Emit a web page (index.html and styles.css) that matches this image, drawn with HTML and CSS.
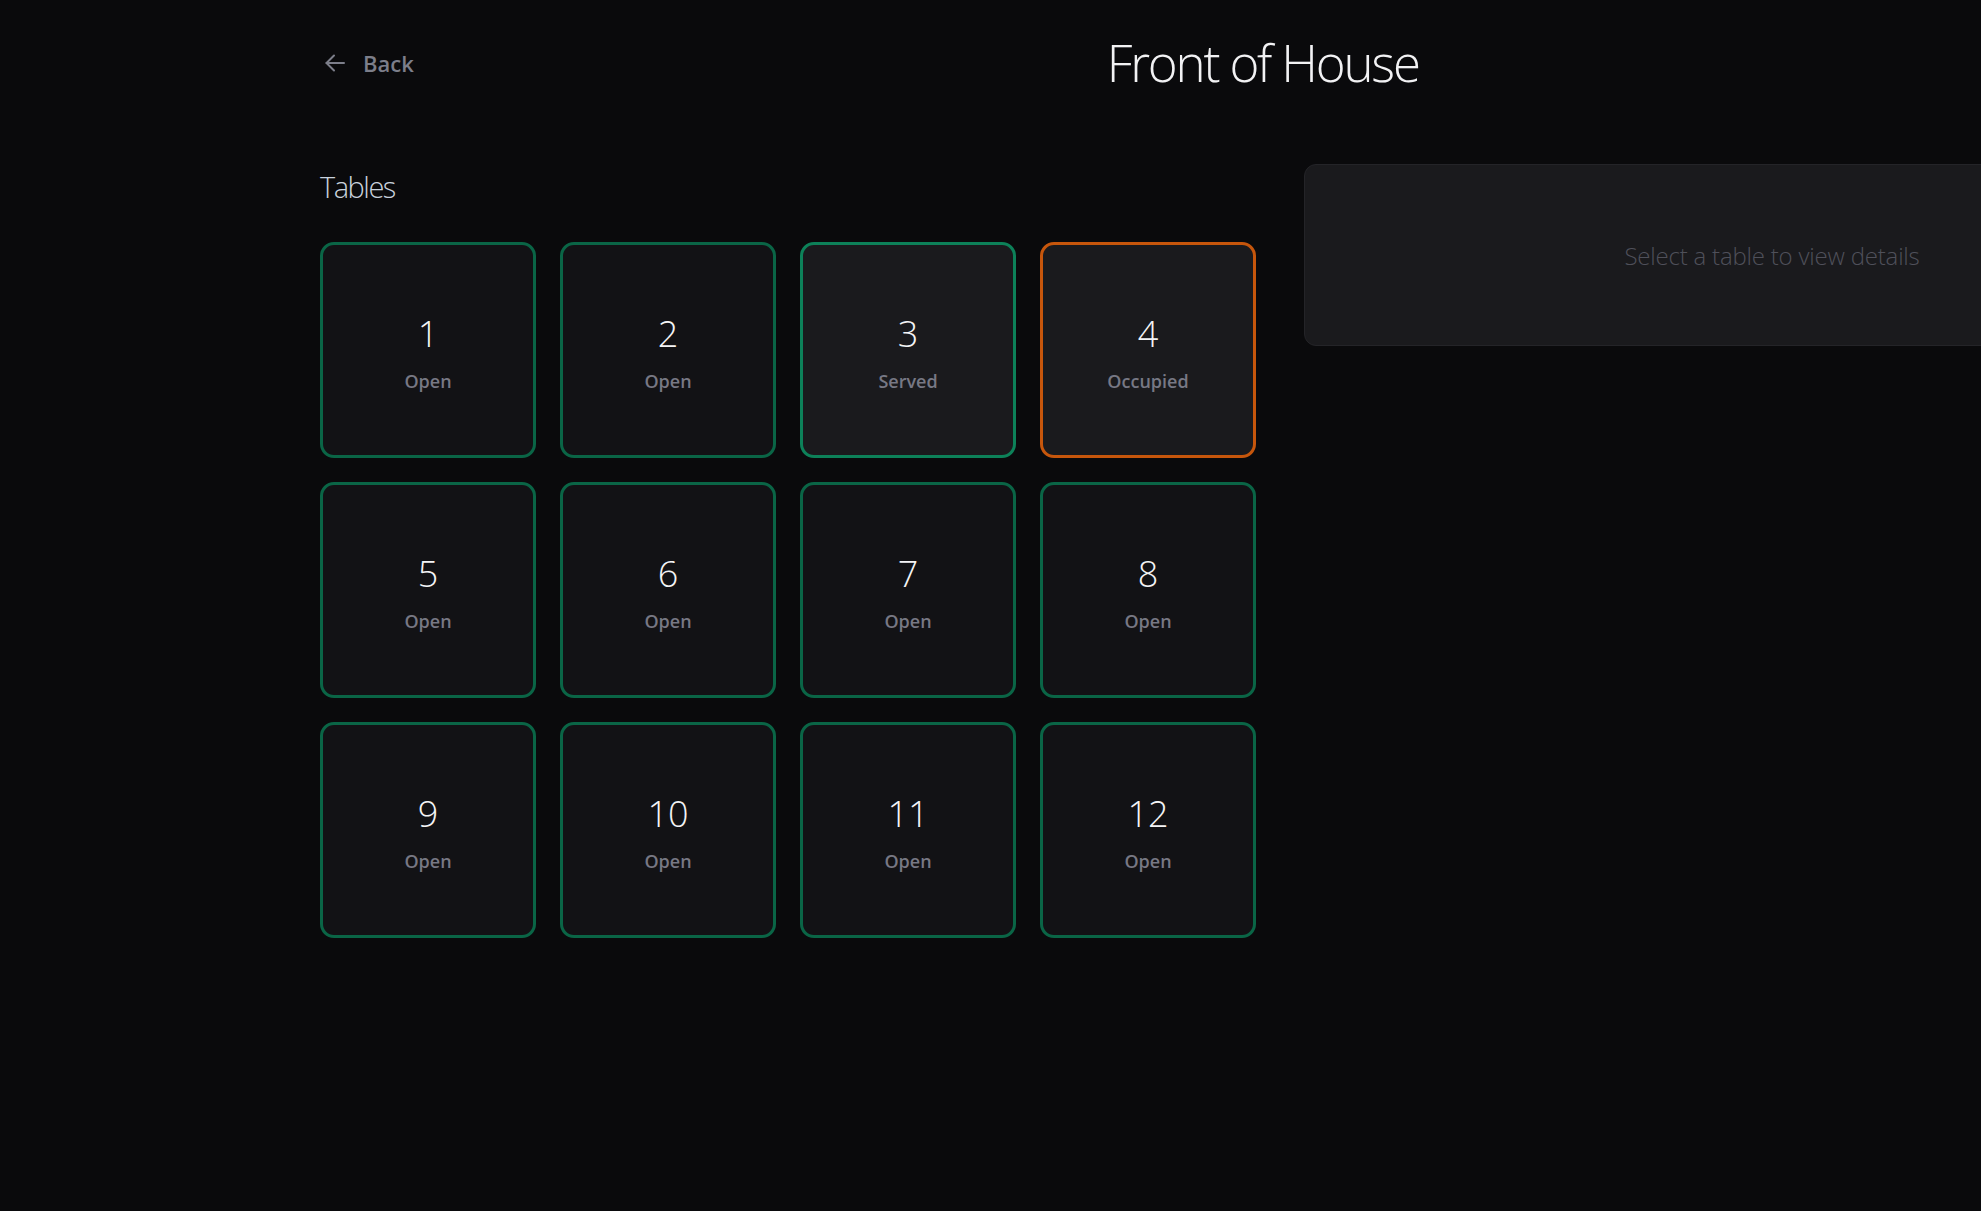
FILE: index.html
```html
<!DOCTYPE html>
<html>

<head>
    <meta charset="utf-8" />
    <meta name="viewport" content="width=device-width, initial-scale=1" />
    <title>Front of House</title>
    <link rel="stylesheet" href="styles.css">
</head>

<body>
    <div class="page">
        <header class="top-bar">
            <a class="back" href="#">
                <svg class="back-icon" width="20" height="18" viewBox="0 0 20 18" fill="none" stroke="currentColor"
                    stroke-width="2" stroke-linecap="round" stroke-linejoin="round">
                    <path d="M19 9H1.5" />
                    <path d="M9 1.5L1.5 9L9 16.5" />
                </svg>
                <span>Back</span>
            </a>
            <h1 class="title">Front of House</h1>
        </header>

        <main class="layout">
            <section class="tables">
                <h2 class="section-title">Tables</h2>
                <div class="table-grid">
                    <button class="table-card open"><span class="num">1</span><span class="status">Open</span></button>
                    <button class="table-card open"><span class="num">2</span><span class="status">Open</span></button>
                    <button class="table-card served"><span class="num">3</span><span class="status">Served</span></button>
                    <button class="table-card occupied"><span class="num">4</span><span class="status">Occupied</span></button>
                    <button class="table-card open"><span class="num">5</span><span class="status">Open</span></button>
                    <button class="table-card open"><span class="num">6</span><span class="status">Open</span></button>
                    <button class="table-card open"><span class="num">7</span><span class="status">Open</span></button>
                    <button class="table-card open"><span class="num">8</span><span class="status">Open</span></button>
                    <button class="table-card open"><span class="num">9</span><span class="status">Open</span></button>
                    <button class="table-card open"><span class="num">10</span><span class="status">Open</span></button>
                    <button class="table-card open"><span class="num">11</span><span class="status">Open</span></button>
                    <button class="table-card open"><span class="num">12</span><span class="status">Open</span></button>
                </div>
            </section>

            <aside class="details">
                <p class="details-empty">Select a table to view details</p>
            </aside>
        </main>
    </div>
</body>

</html>
```

FILE: styles.css
```css
body {
    margin: 0;
    overflow: hidden;
    background: #0a0a0c;
    color: #f0f0f2;
    font-family: "Open Sans", "Noto Sans", sans-serif;
}

.page {
    width: 1920px;
    padding: 32px 0 0 320px;
}

.top-bar {
    display: flex;
    align-items: center;
    height: 62px;
    margin-bottom: 70px;
}

.back {
    display: flex;
    align-items: center;
    gap: 18px;
    padding-left: 5px;
    color: #7c7e8a;
    text-decoration: none;
    font-size: 22px;
    font-weight: 600;
}

.back-icon {
    display: block;
}

.title {
    margin: 0 0 0 693px;
    font-size: 51px;
    font-weight: 300;
    line-height: 1.2;
    letter-spacing: -2.2px;
    color: #f2f2f4;
}

.layout {
    display: grid;
    grid-template-columns: 936px 936px;
    gap: 48px;
    align-items: start;
}

.section-title {
    margin: 5px 0 38px;
    font-size: 29px;
    font-weight: 300;
    line-height: 35px;
    letter-spacing: -1.5px;
    color: #c9d2de;
}

.table-grid {
    display: grid;
    grid-template-columns: repeat(4, 216px);
    gap: 24px;
}

.table-card {
    display: flex;
    flex-direction: column;
    align-items: center;
    justify-content: center;
    gap: 14.5px;
    height: 216px;
    padding: 5px 0 0;
    border: 3px solid #0a6546;
    border-radius: 14px;
    background: #121215;
    font-family: inherit;
    cursor: pointer;
}

.table-card.served {
    border-color: #0d8159;
    background: #1a1a1d;
}

.table-card.occupied {
    border-color: #c6560c;
    background: #1a1a1d;
}

.num {
    font-size: 36px;
    font-weight: 300;
    line-height: 1.2;
    color: #f4f4f6;
}

.status {
    font-size: 18px;
    font-weight: 600;
    line-height: 1.3;
    color: #777884;
}

.details {
    height: 180px;
    display: flex;
    align-items: center;
    justify-content: center;
    border: 1px solid #242428;
    border-radius: 12px;
    background: #1a1a1d;
}

.details-empty {
    margin: 0;
    font-size: 24px;
    font-weight: 300;
    letter-spacing: -0.2px;
    color: #4f505a;
}
```
